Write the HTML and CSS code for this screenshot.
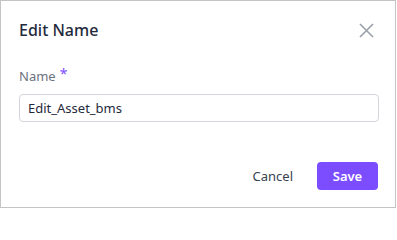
FILE: index.html
```html
<!DOCTYPE html>
<html lang="en">
<head>
<meta charset="utf-8">
<title>Edit Name</title>
<link rel="stylesheet" href="styles.css">
</head>
<body>
<div class="dialog">
  <div class="header">
    <h2 class="title">Edit Name</h2>
    <button class="close" aria-label="Close">
      <svg width="15" height="15" viewBox="0 0 15 15"><path d="M1 1L14 14M14 1L1 14" stroke="#9aa0a9" stroke-width="1.6" fill="none"/></svg>
    </button>
  </div>
  <div class="field">
    <label class="label">Name<span class="req">*</span></label>
    <input class="input" type="text" value="Edit_Asset_bms">
  </div>
  <div class="footer">
    <button class="btn-cancel">Cancel</button>
    <button class="btn-save">Save</button>
  </div>
</div>
</body>
</html>
```
FILE: styles.css
```css
html, body {
  margin: 0;
  padding: 0;
  background: #ffffff;
}
body {
  font-family: "Noto Sans", "Open Sans", sans-serif;
}
.dialog {
  box-sizing: border-box;
  width: 396px;
  height: 208px;
  border: 1px solid #c4c4c4;
  padding: 18px 17px 0 17px;
  display: flex;
  flex-direction: column;
}
.header {
  display: flex;
  justify-content: space-between;
  align-items: center;
  height: 22px;
}
.title {
  margin: 0 0 0 1px;
  font-size: 16px;
  line-height: 22px;
  font-weight: 500;
  color: #1f2a3d;
}
.close {
  border: 0;
  background: none;
  padding: 0;
  margin-right: 4px;
  width: 15px;
  height: 15px;
  display: flex;
  cursor: pointer;
}
.field {
  display: flex;
  flex-direction: column;
  margin-top: 26px;
}
.label {
  font-size: 13px;
  line-height: 18px;
  height: 18px;
  color: #6b7280;
  margin-left: 1px;
}
.req {
  color: #7c4dff;
  font-size: 14px;
  line-height: 0;
  margin-left: 4px;
  vertical-align: 2px;
}
.input {
  box-sizing: border-box;
  margin-top: 9px;
  margin-left: 1px;
  width: 360px;
  height: 28px;
  border: 1px solid #d3d5da;
  border-radius: 4px;
  padding: 0 8px;
  font-family: "Noto Sans", "Open Sans", sans-serif;
  font-size: 13px;
  color: #1f2a3d;
  outline: none;
}
.footer {
  display: flex;
  justify-content: flex-end;
  align-items: center;
  gap: 24px;
  margin-top: 40px;
}
.btn-cancel {
  border: 0;
  background: none;
  padding: 0;
  font-family: "Noto Sans", "Open Sans", sans-serif;
  font-size: 13px;
  color: #374151;
}
.btn-save {
  box-sizing: border-box;
  width: 61px;
  height: 28px;
  border: 0;
  border-radius: 4px;
  background: #7c4dff;
  color: #ffffff;
  font-family: "Noto Sans", "Open Sans", sans-serif;
  font-size: 13px;
  font-weight: 600;
}
```
